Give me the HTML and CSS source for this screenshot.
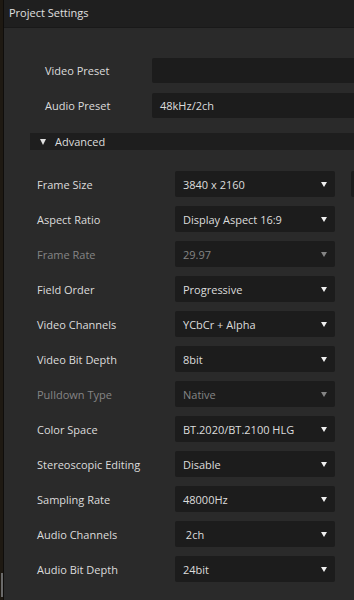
FILE: index.html
```
<!DOCTYPE html>
<html>
<head>
<meta charset="utf-8">
<link rel="stylesheet" href="styles.css">
</head>
<body>
<div class="edge"><div class="edge-thumb"></div></div>
<div class="main">
  <div class="titlebar">Project Settings</div>
  <div class="presets">
    <div class="preset-row"><span class="preset-label">Video Preset</span><div class="preset-box"></div></div>
    <div class="preset-row"><span class="preset-label">Audio Preset</span><div class="preset-box">48kHz/2ch</div></div>
  </div>
  <div class="advanced"><span class="adv-arrow"></span>Advanced</div>
  <div class="rows">
    <div class="row"><span class="label">Frame Size</span><div class="select">3840 x 2160<span class="arrow"></span></div><div class="extra"></div></div>
    <div class="row"><span class="label">Aspect Ratio</span><div class="select">Display Aspect 16:9<span class="arrow"></span></div></div>
    <div class="row disabled"><span class="label">Frame Rate</span><div class="select">29.97<span class="arrow"></span></div></div>
    <div class="row"><span class="label">Field Order</span><div class="select">Progressive<span class="arrow"></span></div></div>
    <div class="row"><span class="label">Video Channels</span><div class="select">YCbCr + Alpha<span class="arrow"></span></div></div>
    <div class="row"><span class="label">Video Bit Depth</span><div class="select">8bit<span class="arrow"></span></div></div>
    <div class="row disabled"><span class="label">Pulldown Type</span><div class="select">Native<span class="arrow"></span></div></div>
    <div class="row"><span class="label">Color Space</span><div class="select">BT.2020/BT.2100 HLG<span class="arrow"></span></div></div>
    <div class="row"><span class="label">Stereoscopic Editing</span><div class="select">Disable<span class="arrow"></span></div></div>
    <div class="row"><span class="label">Sampling Rate</span><div class="select">48000Hz<span class="arrow"></span></div></div>
    <div class="row"><span class="label">Audio Channels</span><div class="select">&nbsp;2ch<span class="arrow"></span></div></div>
    <div class="row"><span class="label">Audio Bit Depth</span><div class="select">24bit<span class="arrow"></span></div></div>
  </div>
</div>
</body>
</html>
```
FILE: styles.css
```
html, body {
  margin: 0;
  padding: 0;
  height: 600px;
  overflow: hidden;
}
body {
  display: flex;
  background: #2a2a2a;
  font-family: "Open Sans", "Noto Sans", sans-serif;
  font-size: 11px;
  color: #dcdcdc;
}
.edge {
  width: 3px;
  flex: none;
  background: #1e1912;
  border-right: 1px solid #0f0d0b;
  display: flex;
  flex-direction: column;
  justify-content: flex-end;
}
.edge-thumb {
  height: 24px;
  margin-bottom: 3px;
  background: #6a6a6a;
  width: 2px;
  margin-left: 1px;
}
.main {
  flex: 1;
  min-width: 0;
  overflow: hidden;
}
.titlebar {
  height: 27px;
  line-height: 25px;
  padding-left: 5px;
  background: #1f1f1f;
  border-bottom: 1px solid #191919;
  color: #e0e0e0;
  font-size: 11px;
}
.presets {
  padding-top: 30px;
  display: flex;
  flex-direction: column;
  gap: 10px;
}
.preset-row {
  display: flex;
  align-items: center;
  height: 25px;
}
.preset-label {
  width: 107px;
  padding-left: 41px;
  flex: none;
}
.preset-box {
  flex: none;
  width: 220px;
  height: 25px;
  line-height: 25px;
  box-sizing: border-box;
  padding-left: 8px;
  background: #1c1c1c;
  border-radius: 2px;
}
.advanced {
  margin: 15px 0 0 26px;
  height: 17px;
  line-height: 17px;
  width: 340px;
  background: #1e1e1e;
  display: flex;
  align-items: center;
}
.adv-arrow {
  width: 0;
  height: 0;
  border-left: 3.5px solid transparent;
  border-right: 3.5px solid transparent;
  border-top: 6px solid #e0e0e0;
  margin: 0 9px 0 10px;
}
.rows {
  padding-top: 21px;
  display: flex;
  flex-direction: column;
  gap: 9px;
}
.row {
  display: flex;
  align-items: center;
  height: 26px;
}
.label {
  width: 138px;
  padding-left: 33px;
  flex: none;
}
.select {
  flex: none;
  width: 160px;
  height: 26px;
  box-sizing: border-box;
  padding: 0 8px;
  background: #1c1c1c;
  border-radius: 2px;
  display: flex;
  align-items: center;
  justify-content: space-between;
}
.arrow {
  width: 0;
  height: 0;
  border-left: 3px solid transparent;
  border-right: 3px solid transparent;
  border-top: 5px solid #f0f0f0;
}
.extra {
  flex: none;
  margin-left: 16px;
  width: 20px;
  height: 26px;
  background: #1c1c1c;
  border-radius: 2px;
}
.disabled .label, .disabled .select {
  color: #858585;
}
.disabled .arrow {
  border-top-color: #858585;
}
```
